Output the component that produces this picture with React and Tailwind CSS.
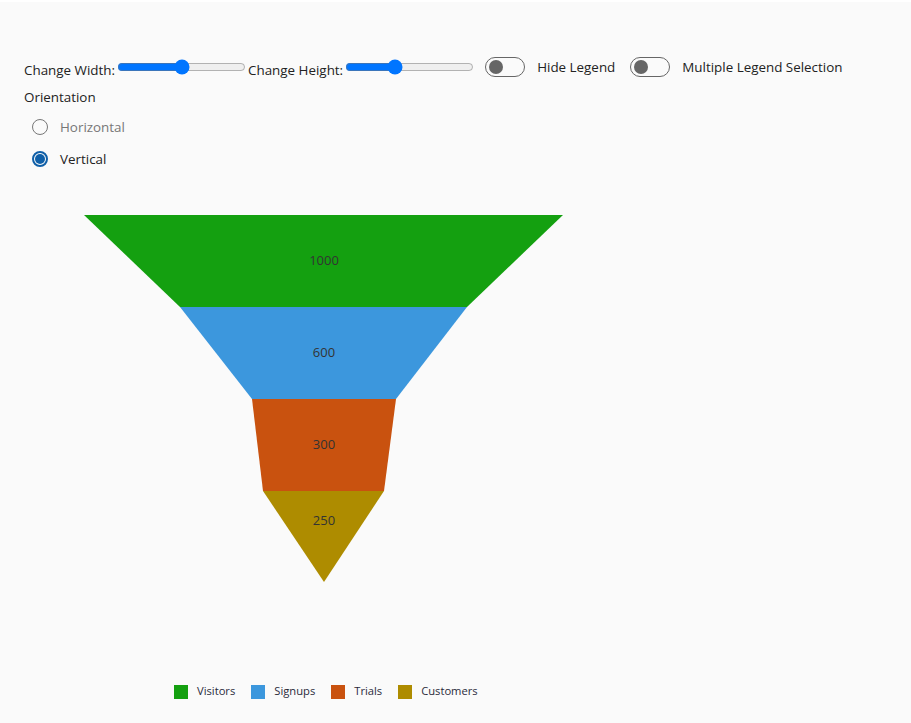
import { useState } from 'react';

const stages = [
    { name: 'Visitors', value: 1000, color: '#14a010', points: '84,215 563,215 467,307 180,307', labelY: 262 },
    { name: 'Signups', value: 600, color: '#3c97dd', points: '180,307 467,307 396,399 252,399', labelY: 354 },
    { name: 'Trials', value: 300, color: '#c9520f', points: '252,399 396,399 384,491 263,491', labelY: 446 },
    { name: 'Customers', value: 250, color: '#ae8c00', points: '263,491 384,491 324,582', labelY: 522 },
];

const Toggle = ({ label }) => (
    <label className="flex items-center gap-3 cursor-pointer">
        <span className="w-10 h-5 rounded-full border border-[#666] flex items-center px-[3px]">
            <span className="w-[14px] h-[14px] rounded-full bg-[#666]"></span>
        </span>
        <span>{label}</span>
    </label>
);

const Radio = ({ label, checked, onClick }) => (
    <div className="flex items-center gap-3 h-8 pl-2 cursor-pointer" onClick={onClick}>
        {checked ? (
            <span className="w-4 h-4 rounded-full border-2 border-[#0f5fa8] flex items-center justify-center">
                <span className="w-[10px] h-[10px] rounded-full bg-[#0f5fa8]"></span>
            </span>
        ) : (
            <span className="w-4 h-4 rounded-full border border-[#777]"></span>
        )}
        <span className={checked ? 'text-[#222]' : 'text-[#777]'}>{label}</span>
    </div>
);

const App = () => {
    const [orientation, setOrientation] = useState('Vertical');
    const [width, setWidth] = useState(50);
    const [height, setHeight] = useState(37);

    return (
        <div className="min-h-[723px] bg-[#fafafa] border-t-2 border-white text-[13.4px] text-[#222]" style={{ fontFamily: '"Open Sans", "Noto Sans", sans-serif' }}>
            <div className="pt-[53px] pl-6">
                <div className="flex items-center h-[24px]">
                    <span className="mt-[6px]">Change Width:</span>
                    <input type="range" min="0" max="100" value={width} onChange={e => setWidth(e.target.value)} className="w-[129px] accent-[#0075ff] mx-[2px]" />
                    <span className="mt-[6px]">Change Height:</span>
                    <input type="range" min="0" max="100" value={height} onChange={e => setHeight(e.target.value)} className="w-[129px] accent-[#0075ff] mx-[2px]" />
                    <div className="flex items-center gap-[15px] ml-[9px]">
                        <Toggle label="Hide Legend" />
                        <Toggle label="Multiple Legend Selection" />
                    </div>
                </div>
                <div className="mt-[8px]">Orientation</div>
                <div className="mt-[4px]">
                    <Radio label="Horizontal" checked={orientation === 'Horizontal'} onClick={() => setOrientation('Horizontal')} />
                    <Radio label="Vertical" checked={orientation === 'Vertical'} onClick={() => setOrientation('Vertical')} />
                </div>
            </div>

            <svg width="911" height="440" viewBox="0 190 911 440" className="block mt-[15px]">
                {stages.map(s => (
                    <g key={s.name}>
                        <polygon points={s.points} fill={s.color} />
                        <text x="324" y={s.labelY} textAnchor="middle" dominantBaseline="middle" fontSize="13" fill="#333">{s.value}</text>
                    </g>
                ))}
            </svg>

            <div className="flex items-center pl-[174px] mt-[53px] text-[11.2px] text-[#2a2a3a]">
                {stages.map(s => (
                    <div key={s.name} className="flex items-center gap-[9px] mr-[16px]">
                        <span className="w-[14px] h-[14px]" style={{ backgroundColor: s.color }}></span>
                        <span>{s.name}</span>
                    </div>
                ))}
            </div>
        </div>
    );
};

export default App;
